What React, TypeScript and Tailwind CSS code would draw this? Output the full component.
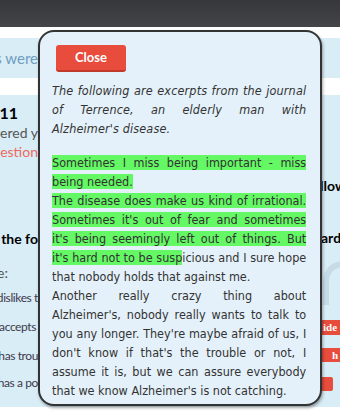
import React from 'react';

const journalFont = "font-['DejaVu_Sans_Condensed','DejaVu_Sans',sans-serif] font-stretch-condensed";

function Highlight({ children }: { children: React.ReactNode }) {
  return <span className="bg-[#64f864]">{children}</span>;
}

function ClippedRow({ text, className }: { text: string; className: string }) {
  // text is cut by the left edge of the window, so push the overflow to the left
  return (
    <div className={`flex justify-end overflow-hidden whitespace-nowrap ${className}`}>
      <span>{text}</span>
    </div>
  );
}

export default function App() {
  return (
    <div className="relative w-[340px] h-[420px] overflow-hidden bg-white font-['Lato',sans-serif]">
      {/* top bar */}
      <div className="h-[27px] bg-gradient-to-b from-[#35373a] to-[#434548]" />
      <div className="h-[11px]" />

      {/* info strip */}
      <div className="h-[40px] bg-[#d9edf7] flex items-center">
        <ClippedRow text="Your responses were" className="w-[38px] text-[15px] text-[#6d9dc0]" />
      </div>
      <div className="h-[17px]" />

      {/* quiz area */}
      <div className="h-[312px] bg-[#d9edf7] flex justify-between">
        <div className="w-[38px] flex flex-col text-[14px] text-[#555]">
          <ClippedRow text="Question 11" className="mt-[8px] pr-[20px] h-[20px] leading-[20px] font-bold text-[16px] text-black" />
          <ClippedRow text="You answered y" className="h-[19px] leading-[19px]" />
          <ClippedRow text="Review question" className="h-[20px] leading-[20px] text-[#ec6a5e]" />
          <ClippedRow text="Select the fo" className="mt-[67px] h-[20px] leading-[20px] font-bold text-black" />
          <ClippedRow text="Choose the one that fits the statement here:" className="mt-[14px] pr-[30px] h-[20px] leading-[20px]" />
          <ClippedRow text="He dislikes t" className="mt-[5px] h-[20px] leading-[20px] text-[12px] tracking-[-0.4px] text-[#40384a]" />
          <ClippedRow text="He accepts" className="mt-[9px] pr-[2px] h-[20px] leading-[20px] text-[12px] tracking-[-0.4px] text-[#40384a]" />
          <ClippedRow text="He has trou" className="mt-[9px] h-[20px] leading-[20px] text-[12px] tracking-[-0.4px] text-[#40384a]" />
          <ClippedRow text="He has a po" className="mt-[7px] h-[20px] leading-[20px] text-[12px] tracking-[-0.4px] text-[#40384a]" />
        </div>

        <div className="w-[18px] flex flex-col overflow-hidden whitespace-nowrap text-[14px] font-bold text-black">
          <div className="mt-[81px] h-[20px] leading-[20px] -ml-[2px]">llowing</div>
          <div className="mt-[32px] h-[20px] leading-[20px] -ml-[1px]">ards</div>
          <div className="mt-[72px] h-[15px] bg-[#e74c3c] text-white font-['Liberation_Serif',serif] text-[11px] leading-[15px] pl-[1px]">ide</div>
          <div className="mt-[13px] h-[14px] bg-[#e74c3c] text-white font-['Liberation_Serif',serif] text-[11px] leading-[14px] pl-[10px]">h</div>
          <div className="mt-[15px] h-[14px] w-[11px] rounded-r-[2px] bg-[#e74c3c]" />
        </div>
      </div>

      {/* faint watermark behind the page */}
      <svg className="absolute left-[300px] top-[250px]" width="40" height="60" viewBox="0 0 40 60">
        <path d="M26 55 L26 32 C26 20 34 14 44 14" fill="none" stroke="#c6dbe6" strokeWidth="6" />
      </svg>

      {/* journal dialog */}
      <div className="absolute left-[38px] top-[30px] w-[284px] h-[376px] rounded-[16px] border-2 border-[#333] bg-[#e4f1fa] shadow-[1px_2px_3px_rgba(0,0,0,0.35)] pt-3 pl-3 pr-[13.8px] overflow-hidden">
        <button className="ml-[4px] h-[27px] w-[70px] rounded-[3px] bg-[#e74c3c] border-b-2 border-[#c0392b] text-white font-bold text-[13px]">
          Close
        </button>
        <div className={`mt-[9px] text-[12.5px] leading-[19px] text-[#333] text-justify ${journalFont}`}>
          <p className="italic tracking-[0.15px] mb-[15px]">
            The following are excerpts from the journal of Terrence, an elderly man with Alzheimer's disease.
          </p>
          <p>
            <Highlight>Sometimes I miss being important - miss being needed.</Highlight>
            <br />
            <Highlight>
              The disease does make us kind of irrational. Sometimes it's out of fear and sometimes it's being seemingly left out of things. But it's hard not to be susp
            </Highlight>
            icious and I sure hope that nobody holds that against me.
            <br />
            Another really crazy thing about Alzheimer's, nobody really wants to talk to you any longer. They're maybe afraid of us, I don't know if that's the trouble or not, I assume it is, but we can assure everybody that we know Alzheimer's is not catching.
          </p>
        </div>
      </div>
    </div>
  );
}
